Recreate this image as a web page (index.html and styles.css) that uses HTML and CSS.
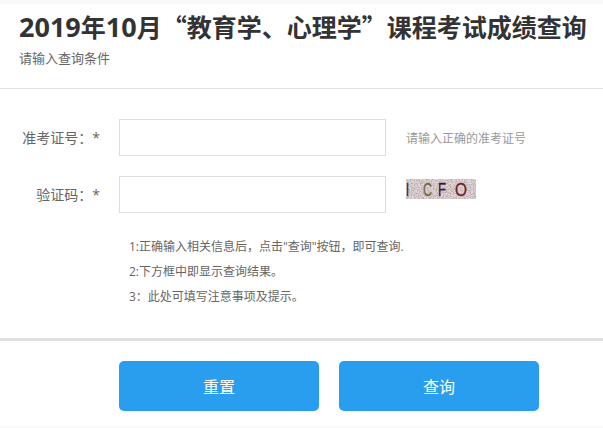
FILE: index.html
```html
<!DOCTYPE html>
<html lang="zh-CN">
<head>
    <meta charset="UTF-8">
    <meta name="viewport" content="width=device-width, initial-scale=1.0">
    <title>成绩查询</title>
    <link rel="stylesheet" href="styles.css">
</head>
<body>
    <div class="page">
        <div class="head">
            <h1><span class="num">2019</span>年<span class="num">10</span>月<span class="quote">“</span>教育学、心理学<span class="quote">”</span>课程考试成绩查询</h1>
            <p class="sub">请输入查询条件</p>
        </div>

        <form class="form">
            <div class="row">
                <label class="label">准考证号：*</label>
                <input class="field" type="text">
                <span class="hint">请输入正确的准考证号</span>
            </div>
            <div class="row">
                <label class="label">验证码：*</label>
                <input class="field" type="text">
                <svg class="captcha" width="70" height="20" viewBox="0 0 70 20">
                    <filter id="speckle" x="0" y="0" width="100%" height="100%">
                        <feTurbulence type="fractalNoise" baseFrequency="0.7" numOctaves="3" seed="4"/>
                        <feColorMatrix type="matrix" values="0 0 0 0 0.42  0 0 0 0 0.40  0 0 0 0 0.36  2.4 0 0 0 -0.85"/>
                    </filter>
                    <rect width="70" height="20" fill="#e8d6de"/>
                    <rect width="70" height="20" filter="url(#speckle)"/>
                    <text x="0" y="17" textLength="3" lengthAdjust="spacingAndGlyphs" class="c1">I</text>
                    <text x="17" y="17" textLength="9" lengthAdjust="spacingAndGlyphs" class="c2">C</text>
                    <text x="32" y="17" textLength="8" lengthAdjust="spacingAndGlyphs" class="c3">F</text>
                    <text x="49" y="17" textLength="12" lengthAdjust="spacingAndGlyphs" class="c4">O</text>
                </svg>
            </div>
            <ul class="notes">
                <li>1:正确输入相关信息后，点击"查询"按钮，即可查询.</li>
                <li>2:下方框中即显示查询结果。</li>
                <li>3：此处可填写注意事项及提示。</li>
            </ul>
        </form>

        <div class="actions">
            <button class="button" type="button">重置</button>
            <button class="button" type="button">查询</button>
        </div>
    </div>
</body>
</html>
```

FILE: styles.css
```css
* {
    box-sizing: border-box;
}
html, body {
    margin: 0;
    padding: 0;
}
body {
    height: 428px;
    overflow: hidden;
    background: #f9f9f9;
    font-family: "Open Sans", "Noto Sans CJK SC", sans-serif;
    color: #666;
}
.page {
    margin-top: 4px;
    height: 422px;
    background: white;
}
.head {
    height: 85px;
    padding: 5px 19px 0;
    border-bottom: 1px solid #e2e2e2;
}
h1 {
    margin: 0;
    height: 36px;
    font-size: 25px;
    line-height: 36px;
    font-weight: 700;
    color: #333;
    white-space: nowrap;
}
.num {
    font-size: 27px;
    line-height: 1;
}
.quote {
    font-family: "Noto Sans CJK SC", sans-serif;
    line-height: 1;
}
.sub {
    margin: 4px 0 0;
    font-size: 13px;
    line-height: 18px;
    color: #666;
}
.form {
    height: 252px;
    padding-top: 30px;
    border-bottom: 3px solid #e0e0e0;
}
.row {
    display: flex;
    align-items: center;
    height: 37px;
    margin-bottom: 20px;
}
.label {
    width: 100px;
    margin: -1px 19px 0 0;
    text-align: right;
    font-size: 14px;
    color: #666;
}
.field {
    width: 267px;
    height: 37px;
    border: 1px solid #ddd;
    background: white;
}
.hint {
    margin-left: 20px;
    font-size: 12px;
    color: #999;
}
.captcha {
    margin: -11px 0 0 20px;
}
.captcha text {
    font-family: "Liberation Sans", sans-serif;
    font-size: 19px;
    stroke-width: 0.3;
}
.c1 { fill: #1c1440; stroke: #1c1440; }
.c2 { fill: #6b6a35; stroke: #6b6a35; }
.c3 { fill: #3a1430; stroke: #3a1430; }
.c4 { fill: #6e1a28; stroke: #6e1a28; }
.notes {
    list-style: none;
    margin: 0;
    padding: 1px 0 0 129px;
    font-size: 12px;
    line-height: 25px;
    color: #666;
}
.actions {
    display: flex;
    gap: 20px;
    padding: 20px 0 0 119px;
}
.button {
    width: 200px;
    height: 50px;
    border: none;
    border-radius: 5px;
    background: #2a9eee;
    color: white;
    font-family: inherit;
    font-size: 16px;
    cursor: pointer;
}
```
